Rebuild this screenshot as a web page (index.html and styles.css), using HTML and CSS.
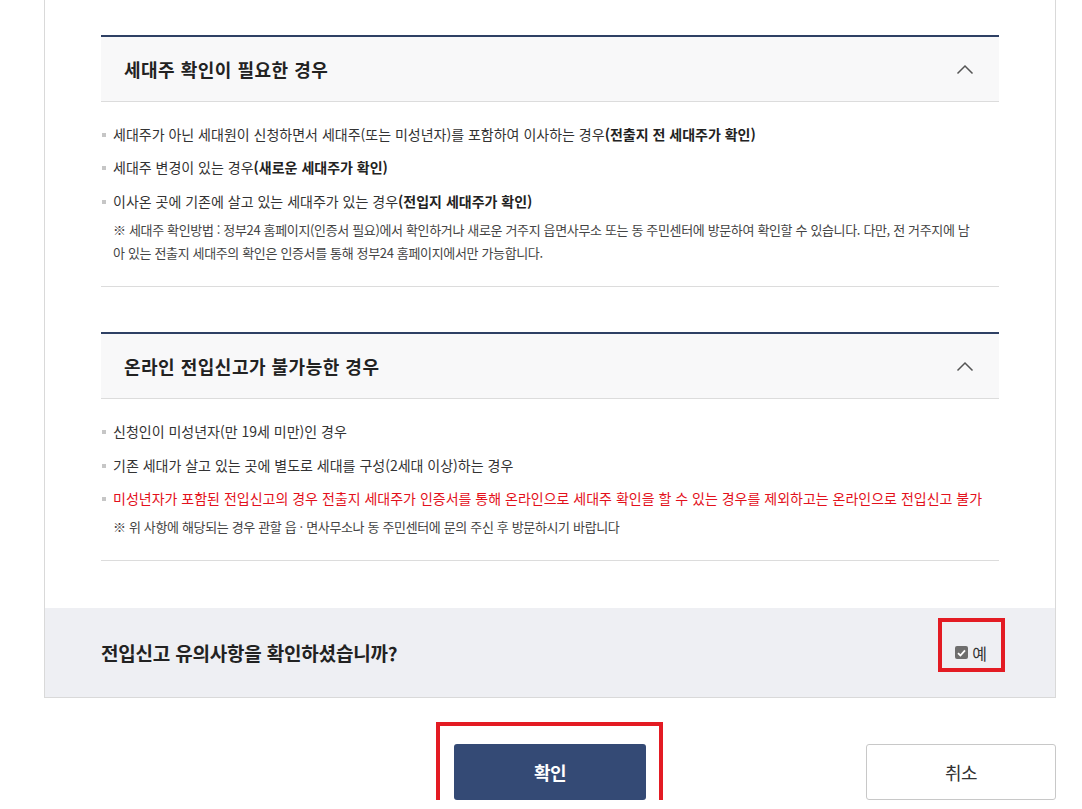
FILE: index.html
```html
<!DOCTYPE html>
<html lang="ko">
<head>
<meta charset="utf-8">
<title>전입신고 유의사항</title>
<link rel="stylesheet" href="styles.css">
</head>
<body>
<div class="page">
  <div class="panel">
    <div class="panel-body">
      <section class="acc">
        <div class="acc-head">
          <h3 class="acc-title">세대주 확인이 필요한 경우</h3>
          <svg class="chev" width="18" height="11" viewBox="0 0 18 11"><path d="M1.5 9.5 L9 2 L16.5 9.5" fill="none" stroke="#555" stroke-width="1.5"/></svg>
        </div>
        <div class="acc-body">
          <ul class="items">
            <li>세대주가 아닌 세대원이 신청하면서 세대주(또는 미성년자)를 포함하여 이사하는 경우<b>(전출지 전 세대주가 확인)</b></li>
            <li>세대주 변경이 있는 경우<b>(새로운 세대주가 확인)</b></li>
            <li>이사온 곳에 기존에 살고 있는 세대주가 있는 경우<b>(전입지 세대주가 확인)</b></li>
          </ul>
          <p class="note">※ 세대주 확인방법 : 정부24 홈페이지(인증서 필요)에서 확인하거나 새로운 거주지 읍면사무소 또는 동 주민센터에 방문하여 확인할 수 있습니다. 다만, 전 거주지에 남아 있는 전출지 세대주의 확인은 인증서를 통해 정부24 홈페이지에서만 가능합니다.</p>
        </div>
      </section>
      <section class="acc">
        <div class="acc-head">
          <h3 class="acc-title">온라인 전입신고가 불가능한 경우</h3>
          <svg class="chev" width="18" height="11" viewBox="0 0 18 11"><path d="M1.5 9.5 L9 2 L16.5 9.5" fill="none" stroke="#555" stroke-width="1.5"/></svg>
        </div>
        <div class="acc-body">
          <ul class="items">
            <li>신청인이 미성년자(만 19세 미만)인 경우</li>
            <li>기존 세대가 살고 있는 곳에 별도로 세대를 구성(2세대 이상)하는 경우</li>
            <li class="red">미성년자가 포함된 전입신고의 경우 전출지 세대주가 인증서를 통해 온라인으로 세대주 확인을 할 수 있는 경우를 제외하고는 온라인으로 전입신고 불가</li>
          </ul>
          <p class="note">※ 위 사항에 해당되는 경우 관할 읍 · 면사무소나 동 주민센터에 문의 주신 후 방문하시기 바랍니다</p>
        </div>
      </section>
    </div>
    <div class="confirm-bar">
      <p class="question">전입신고 유의사항을 확인하셨습니까?</p>
      <label class="check">
        <span class="box"><svg width="9" height="8" viewBox="0 0 9 8"><path d="M1 4.2 L3.4 6.5 L8 1.3" fill="none" stroke="#fff" stroke-width="1.8"/></svg></span>
        <span class="check-text">예</span>
        <span class="mark mark-check"></span>
      </label>
    </div>
  </div>
  <div class="buttons">
    <div class="btn-wrap">
      <button class="btn btn-primary">확인</button>
      <span class="mark mark-btn"></span>
    </div>
    <button class="btn btn-cancel">취소</button>
  </div>
</div>
</body>
</html>
```
FILE: styles.css
```css
* { box-sizing: border-box; }
html, body { margin: 0; padding: 0; background: #fff; }
body {
  font-family: "Noto Sans CJK KR", "Noto Sans", sans-serif;
  color: #333;
}
.page {
  width: 1012px;
  margin-left: 44px;
}
.panel {
  border-left: 1px solid #d9d9d9;
  border-right: 1px solid #d9d9d9;
  border-bottom: 1px solid #d9d9d9;
}
.panel-body {
  padding: 35px 56px 47px;
}
.acc + .acc { margin-top: 45px; }
.acc-head {
  border-top: 2px solid #2e4064;
  border-bottom: 1px solid #dcdcdc;
  background: #f8f8f9;
  height: 67px;
  display: flex;
  align-items: center;
  justify-content: space-between;
  padding: 0 25px 0 23px;
}
.acc-title {
  margin: 0;
  font-size: 18px;
  font-weight: 700;
  color: #222;
  letter-spacing: 0.5px;
  line-height: 1;
}
.chev { display: block; margin-top: 1px; }
.acc-body {
  padding: 16px 0 22px;
  border-bottom: 1px solid #dcdcdc;
}
.items {
  list-style: none;
  margin: 0;
  padding: 0;
}
.items li {
  position: relative;
  padding-left: 12px;
  font-size: 14px;
  line-height: 33.4px;
  letter-spacing: 0;
  color: #333;
  white-space: nowrap;
}
.items li::before {
  content: "";
  position: absolute;
  left: 1px;
  top: 15px;
  width: 4px;
  height: 4px;
  background: #c6c6c6;
}
.items li b { font-weight: 700; color: #222; }
.items li.red { color: #e3101b; }
.note {
  margin: 0;
  padding-left: 12px;
  font-size: 13px;
  line-height: 23px;
  letter-spacing: -0.35px;
  color: #444;
  padding-right: 18px;
}
.confirm-bar {
  background: #eeeff3;
  height: 89px;
  display: flex;
  align-items: center;
  justify-content: space-between;
  padding: 0 68px 0 56px;
}
.question {
  margin: 0;
  font-size: 19px;
  font-weight: 700;
  color: #222;
  letter-spacing: -0.2px;
}
.check {
  position: relative;
  display: flex;
  align-items: center;
  gap: 4px;
  font-size: 16px;
  color: #333;
}
.box {
  width: 13px;
  height: 13px;
  border-radius: 2px;
  background: #6e6e6e;
  display: flex;
  align-items: center;
  justify-content: center;
}
.box svg { display: block; }
.check-text { line-height: 1; }
.mark {
  position: absolute;
  border: 4px solid #e31b23;
  pointer-events: none;
}
.mark-check {
  left: -17px;
  top: -27px;
  width: 67px;
  height: 54px;
}
.buttons {
  display: grid;
  grid-template-columns: 1fr auto 1fr;
  margin-top: 46px;
  align-items: start;
}
.btn-wrap {
  grid-column: 2;
  position: relative;
}
.btn {
  font-family: inherit;
  font-size: 18px;
  height: 56px;
  border-radius: 3px;
  cursor: pointer;
  letter-spacing: -0.5px;
}
.btn-primary {
  display: block;
  width: 192px;
  background: #344a75;
  border: 0;
  color: #fff;
  font-weight: 700;
}
.btn-cancel {
  grid-column: 3;
  justify-self: end;
  width: 190px;
  background: #fff;
  border: 1px solid #c8c8c8;
  color: #333;
}
.mark-btn {
  left: -18px;
  top: -22px;
  width: 227px;
  height: 84px;
}
```
